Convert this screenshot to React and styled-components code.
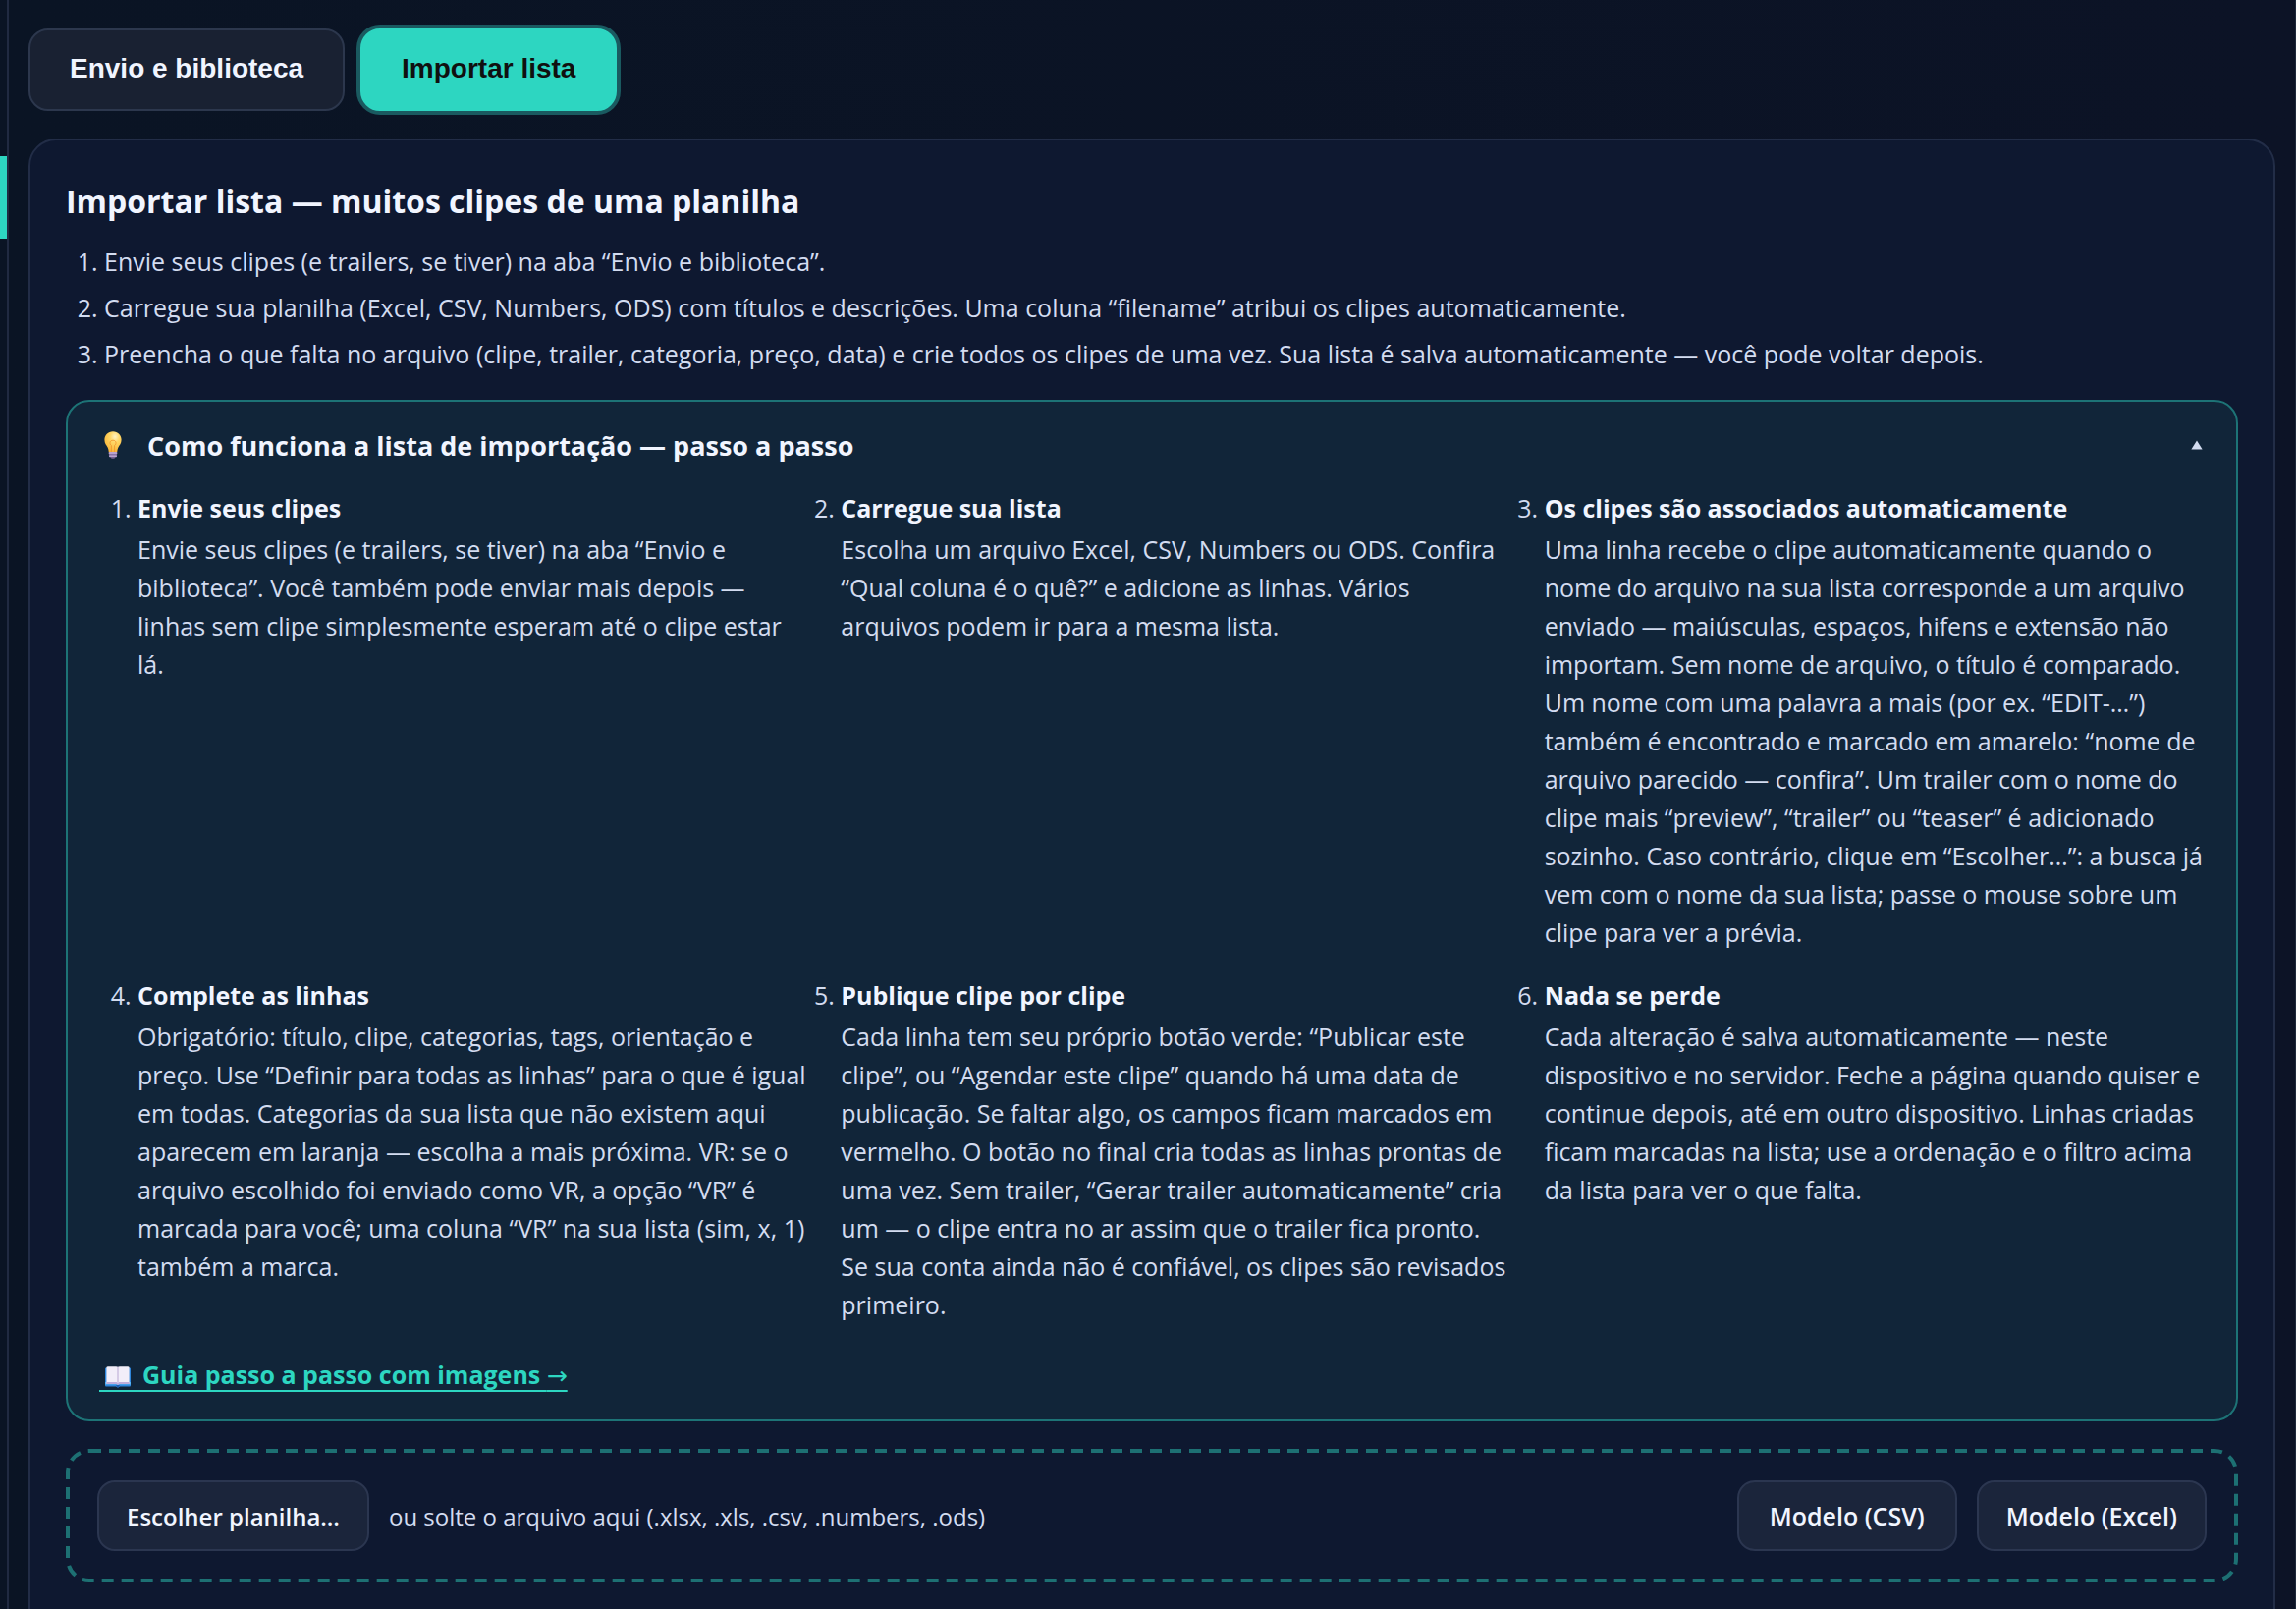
import { useState } from "react";
import styled, { createGlobalStyle } from "styled-components";

const INTRO = [
    "Envie seus clipes (e trailers, se tiver) na aba “Envio e biblioteca”.",
    "Carregue sua planilha (Excel, CSV, Numbers, ODS) com títulos e descrições. Uma coluna “filename” atribui os clipes automaticamente.",
    "Preencha o que falta no arquivo (clipe, trailer, categoria, preço, data) e crie todos os clipes de uma vez. Sua lista é salva automaticamente — você pode voltar depois.",
];

const PASSOS = [
    {
        titulo: "Envie seus clipes",
        texto: "Envie seus clipes (e trailers, se tiver) na aba “Envio e biblioteca”. Você também pode enviar mais depois — linhas sem clipe simplesmente esperam até o clipe estar lá.",
    },
    {
        titulo: "Carregue sua lista",
        texto: "Escolha um arquivo Excel, CSV, Numbers ou ODS. Confira “Qual coluna é o quê?” e adicione as linhas. Vários arquivos podem ir para a mesma lista.",
    },
    {
        titulo: "Os clipes são associados automaticamente",
        texto: "Uma linha recebe o clipe automaticamente quando o nome do arquivo na sua lista corresponde a um arquivo enviado — maiúsculas, espaços, hifens e extensão não importam. Sem nome de arquivo, o título é comparado. Um nome com uma palavra a mais (por ex. “EDIT-…”) também é encontrado e marcado em amarelo: “nome de arquivo parecido — confira”. Um trailer com o nome do clipe mais “preview”, “trailer” ou “teaser” é adicionado sozinho. Caso contrário, clique em “Escolher…”: a busca já vem com o nome da sua lista; passe o mouse sobre um clipe para ver a prévia.",
    },
    {
        titulo: "Complete as linhas",
        texto: "Obrigatório: título, clipe, categorias, tags, orientação e preço. Use “Definir para todas as linhas” para o que é igual em todas. Categorias da sua lista que não existem aqui aparecem em laranja — escolha a mais próxima. VR: se o arquivo escolhido foi enviado como VR, a opção “VR” é marcada para você; uma coluna “VR” na sua lista (sim, x, 1) também a marca.",
    },
    {
        titulo: "Publique clipe por clipe",
        texto: "Cada linha tem seu próprio botão verde: “Publicar este clipe”, ou “Agendar este clipe” quando há uma data de publicação. Se faltar algo, os campos ficam marcados em vermelho. O botão no final cria todas as linhas prontas de uma vez. Sem trailer, “Gerar trailer automaticamente” cria um — o clipe entra no ar assim que o trailer fica pronto. Se sua conta ainda não é confiável, os clipes são revisados primeiro.",
    },
    {
        titulo: "Nada se perde",
        texto: "Cada alteração é salva automaticamente — neste dispositivo e no servidor. Feche a página quando quiser e continue depois, até em outro dispositivo. Linhas criadas ficam marcadas na lista; use a ordenação e o filtro acima da lista para ver o que falta.",
    },
];

export default function App() {

    const [aba, setAba] = useState("importar");
    const [aberto, setAberto] = useState(true);

    return (
        <Pagina>
            <GlobalStyle />
            <Lateral>
                <ItemAtivo />
            </Lateral>
            <Conteudo>
                <Abas>
                    <Aba type="button" $ativa={aba === "envio"} onClick={() => setAba("envio")}>Envio e biblioteca</Aba>
                    <Aba type="button" $ativa={aba === "importar"} onClick={() => setAba("importar")}>Importar lista</Aba>
                </Abas>

                <Cartao>
                    <Titulo>Importar lista — muitos clipes de uma planilha</Titulo>
                    <Intro>
                        {INTRO.map((linha) => <li key={linha}>{linha}</li>)}
                    </Intro>

                    <Ajuda>
                        <AjudaTopo type="button" aria-expanded={aberto} onClick={() => setAberto(!aberto)}>
                            <Lampada />
                            <AjudaTitulo>Como funciona a lista de importação — passo a passo</AjudaTitulo>
                            <Seta $aberto={aberto} viewBox="0 0 12 10" aria-hidden="true">
                                <path d="M6 0.5 L11.6 9.5 H0.4 Z" />
                            </Seta>
                        </AjudaTopo>
                        {aberto && (
                            <>
                                <Passos>
                                    {PASSOS.map((passo) => (
                                        <Passo key={passo.titulo}>
                                            <PassoTitulo>{passo.titulo}</PassoTitulo>
                                            <PassoTexto>{passo.texto}</PassoTexto>
                                        </Passo>
                                    ))}
                                </Passos>
                                <Guia href="#guia">
                                    <GuiaIcone><Livro /></GuiaIcone>
                                    <GuiaTexto>Guia passo a passo com imagens <GuiaSeta>→</GuiaSeta></GuiaTexto>
                                </Guia>
                            </>
                        )}
                    </Ajuda>

                    <Soltar>
                        <Moldura aria-hidden="true">
                            <rect />
                        </Moldura>
                        <Botao type="button" $compacto>Escolher planilha…</Botao>
                        <Dica>ou solte o arquivo aqui (.xlsx, .xls, .csv, .numbers, .ods)</Dica>
                        <Botao type="button">Modelo (CSV)</Botao>
                        <Botao type="button">Modelo (Excel)</Botao>
                    </Soltar>
                </Cartao>
            </Conteudo>
        </Pagina>
    )
}

function Lampada() {
    return (
        <LampadaSvg viewBox="0 0 18 28" aria-hidden="true">
            <defs>
                <radialGradient id="vidro" cx="0.62" cy="0.25" r="0.8">
                    <stop offset="0" stopColor="#fff3c4" />
                    <stop offset="0.35" stopColor="#ffd766" />
                    <stop offset="1" stopColor="#f9b233" />
                </radialGradient>
            </defs>
            <path d="M9 0.3 C4 0.3 0.4 4 0.4 8.8 C0.4 12.4 2.4 14.3 3.6 16.6 C4.4 18.2 4.5 19.6 4.8 21.2 H13.2 C13.5 19.6 13.6 18.2 14.4 16.6 C15.6 14.3 17.6 12.4 17.6 8.8 C17.6 4 14 0.3 9 0.3 Z" fill="url(#vidro)" />
            <path d="M7.4 21 V14.5 C5.4 13.6 5.2 9.2 9 9.2 C12.8 9.2 12.6 13.6 10.6 14.5 V21" fill="none" stroke="#f0962e" strokeWidth="0.9" />
            <rect x="4.6" y="21" width="8.8" height="2.2" rx="1" fill="#b9a3cf" />
            <rect x="4.8" y="23" width="8.4" height="2" rx="1" fill="#8a74a6" />
            <rect x="5" y="24.6" width="8" height="1.6" rx="0.8" fill="#b9a3cf" />
            <path d="M6.4 26 H11.6 L10.4 27.8 H7.6 Z" fill="#75608f" />
        </LampadaSvg>
    )
}

function Livro() {
    return (
        <LivroSvg viewBox="0 0 26 22" aria-hidden="true">
            <path d="M0 2.5 Q0 1.5 1 1.5 H25 Q26 1.5 26 2.5 V19.5 Q26 20.5 25 20.5 H15 L13 21.8 L11 20.5 H1 Q0 20.5 0 19.5 Z" fill="#2f86dc" />
            <path d="M0 16 H26 V18.6 H0 Z" fill="#55b4f4" />
            <path d="M11 19 H15 L13 21.8 Z" fill="#1c5bb0" />
            <path d="M1.4 1.2 Q1.6 0.2 3 0.2 H11 Q13 0.2 13 1.6 Q13 0.2 15 0.2 H23 Q24.4 0.2 24.6 1.2 V17.8 H1.4 Z" fill="#f2eef9" />
            <path d="M1.4 16 H11.4 Q13 16 13 17 Q13 16 14.6 16 H24.6 V18 H14.8 L13 19 L11.2 18 H1.4 Z" fill="#bfaedb" />
            <path d="M12 0.6 Q13 1 13 1.8 Q13 1 14 0.6 V16.2 L13 17 L12 16.2 Z" fill="#d5cbe6" />
        </LivroSvg>
    )
}

const GlobalStyle = createGlobalStyle`
    * {
        box-sizing: border-box;
    }
    body {
        margin: 0;
        background-color: #0b1324;
        color: #d3dcf0;
        font-family: "Open Sans", "Noto Sans", "DejaVu Sans", sans-serif;
        font-size: 25px;
    }
    button {
        font-family: inherit;
        cursor: pointer;
    }
`

const Pagina = styled.div`
    display: flex;
    height: 100vh;
    border-right: 1px solid #1f2a3c;
    background: linear-gradient(90deg, #0a1424, #0c1326);
`

const Lateral = styled.aside`
    flex: none;
    width: 9px;
    padding-top: 159px;
    border-right: 2px solid #202a41;
`

const ItemAtivo = styled.div`
    height: 84px;
    background-color: #2dd6c1;
`

const Conteudo = styled.main`
    flex: 1;
    min-width: 0;
    padding: 29px 20px;
    overflow-y: auto;
    scrollbar-width: none;
`

const Abas = styled.nav`
    display: flex;
    gap: 16px;
    margin-bottom: 28px;
`

const Aba = styled.button`
    height: 84px;
    padding: 0 40px 2px;
    border: 2px solid ${(props) => props.$ativa ? "#2dd6c1" : "#2c374d"};
    border-radius: 20px;
    background-color: ${(props) => props.$ativa ? "#2dd6c1" : "#192132"};
    box-shadow: ${(props) => props.$ativa ? "0 0 0 4px #1a5a60" : "none"};
    color: ${(props) => props.$ativa ? "#101010" : "#f1f5ff"};
    font-family: "Liberation Sans", Arial, sans-serif;
    font-size: 28px;
    font-weight: 700;
`

const Cartao = styled.section`
    padding: 36px 36px 72px;
    border: 2px solid #222d47;
    border-radius: 28px;
    background-color: #0e1830;
`

const Titulo = styled.h2`
    margin: 0;
    color: #f1f5ff;
    font-size: 32px;
    font-weight: 700;
    line-height: 52px;
`

const Intro = styled.ol`
    margin: 16px 0 27px;
    padding-left: 39px;
    line-height: 39px;

    li + li {
        margin-top: 8px;
    }
`

const Ajuda = styled.section`
    padding: 24px 32px 25px;
    border: 2px solid #1d7376;
    border-radius: 24px;
    background-color: #112539;
`

const AjudaTopo = styled.button`
    display: flex;
    align-items: center;
    width: 100%;
    height: 40px;
    padding: 0 2px 0 5px;
    border: none;
    background: none;
    color: #f1f5ff;
    text-align: left;
`

const LampadaSvg = styled.svg`
    width: 18px;
    height: 28px;
    margin-right: 26px;
`

const AjudaTitulo = styled.span`
    flex: 1;
    font-size: 27px;
    font-weight: 700;
`

const Seta = styled.svg`
    width: 12px;
    height: 10px;
    fill: #d3dcf0;
    transform: ${(props) => props.$aberto ? "none" : "rotate(180deg)"};
`

const Passos = styled.ol`
    display: grid;
    grid-template-columns: repeat(3, 1fr);
    gap: 24px 32px;
    margin: 24px -12px 31px 0;
    padding-left: 39px;
`

const Passo = styled.li`
    line-height: 39px;
`

const PassoTitulo = styled.strong`
    display: block;
    margin-bottom: 3px;
    color: #f1f5ff;
    font-weight: 700;
    line-height: 40px;
`

const PassoTexto = styled.span`
    display: block;
`

const Guia = styled.a`
    display: inline-flex;
    height: 40px;
    color: #2dd6c1;
    font-weight: 700;
    line-height: 40px;
    text-decoration: none;
`

const GuiaIcone = styled.span`
    display: flex;
    align-items: flex-end;
    height: 38px;
    padding: 0 12px 2px 6px;
    border-bottom: 2px solid #2dd6c1;
`

const LivroSvg = styled.svg`
    width: 26px;
    height: 22px;
`

const GuiaTexto = styled.span`
    text-decoration: underline;
    text-decoration-thickness: 2px;
    text-underline-offset: 6px;
`

const GuiaSeta = styled.span`
    font-weight: 400;
`

const Soltar = styled.div`
    position: relative;
    display: flex;
    align-items: center;
    gap: 20px;
    margin-top: 28px;
    padding: 32px;
    border-radius: 24px;
`

const Moldura = styled.svg`
    position: absolute;
    inset: 0;
    width: 100%;
    height: 100%;
    pointer-events: none;

    rect {
        x: 2px;
        y: 2px;
        width: calc(100% - 4px);
        height: calc(100% - 4px);
        rx: 22px;
        fill: none;
        stroke: #1d7073;
        stroke-width: 4px;
        stroke-dasharray: 12 8;
    }
`

const Botao = styled.button`
    min-width: 224px;
    height: 72px;
    padding: 0 28px;
    border: 2px solid #2b3650;
    border-radius: 18px;
    background-color: #1b253b;
    color: #f1f5ff;
    font-size: ${(props) => props.$compacto ? "24px" : "25px"};
    font-weight: 600;
    white-space: nowrap;
`

const Dica = styled.span`
    flex: 1;
    font-size: 24px;
`
